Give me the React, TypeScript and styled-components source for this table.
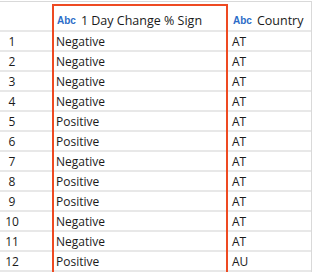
import React from "react";
import styled, { createGlobalStyle } from "styled-components";

const rows: { sign: string; country: string }[] = [
  { sign: "Negative", country: "AT" },
  { sign: "Negative", country: "AT" },
  { sign: "Negative", country: "AT" },
  { sign: "Negative", country: "AT" },
  { sign: "Positive", country: "AT" },
  { sign: "Positive", country: "AT" },
  { sign: "Negative", country: "AT" },
  { sign: "Positive", country: "AT" },
  { sign: "Positive", country: "AT" },
  { sign: "Negative", country: "AT" },
  { sign: "Negative", country: "AT" },
  { sign: "Positive", country: "AU" },
];

export default function App() {
  return (
    <>
      <GlobalStyle />
      <Grid>
        <HeaderCell />
        <HeaderCell>
          <TypeTag>Abc</TypeTag>
          <HeaderLabel>1 Day Change % Sign</HeaderLabel>
        </HeaderCell>
        <HeaderCell>
          <TypeTag>Abc</TypeTag>
          <HeaderLabel>Country</HeaderLabel>
        </HeaderCell>
        {rows.map((row, i) => (
          <React.Fragment key={i}>
            <IndexCell>
              <IndexNumber>{i + 1}</IndexNumber>
            </IndexCell>
            <Cell>{row.sign}</Cell>
            <Cell>{row.country}</Cell>
          </React.Fragment>
        ))}
        <Highlight />
      </Grid>
    </>
  );
}

const GlobalStyle = createGlobalStyle`
  html, body {
    margin: 0;
    background: #ffffff;
  }
  body {
    font-family: "Open Sans", "Noto Sans", sans-serif;
    font-size: 12px;
    color: #1a1a1a;
  }
`;

const Grid = styled.div`
  position: relative;
  display: grid;
  grid-template-columns: 52px 176px 83px;
  grid-template-rows: 30px;
  grid-auto-rows: 20px;
  width: 311px;
  margin-top: 1px;
  border-top: 1px solid #d9d9d9;
  border-right: 1px solid #d9d9d9;
`;

const HeaderCell = styled.div`
  display: flex;
  align-items: flex-end;
  gap: 5px;
  padding: 0 0 1px 5px;
  border-bottom: 2px solid #e8e8e8;
  white-space: nowrap;
  overflow: hidden;
`;

const TypeTag = styled.span`
  font-family: "Liberation Sans", Arial, sans-serif;
  font-weight: bold;
  font-size: 10px;
  color: #2b6cc8;
  line-height: 17px;
`;

const HeaderLabel = styled.span`
  font-size: 12.5px;
  line-height: 17px;
`;

const Cell = styled.div`
  display: flex;
  align-items: center;
  padding-left: 4px;
  border-bottom: 2px solid #e8e8e8;
  white-space: nowrap;
`;

const IndexCell = styled(Cell)`
  padding-left: 0;
`;

const IndexNumber = styled.span`
  width: 24px;
  text-align: center;
`;

const Highlight = styled.div`
  position: absolute;
  left: 52px;
  top: 2px;
  width: 172px;
  height: 266px;
  border: 2px solid #ee4a22;
  pointer-events: none;
`;
